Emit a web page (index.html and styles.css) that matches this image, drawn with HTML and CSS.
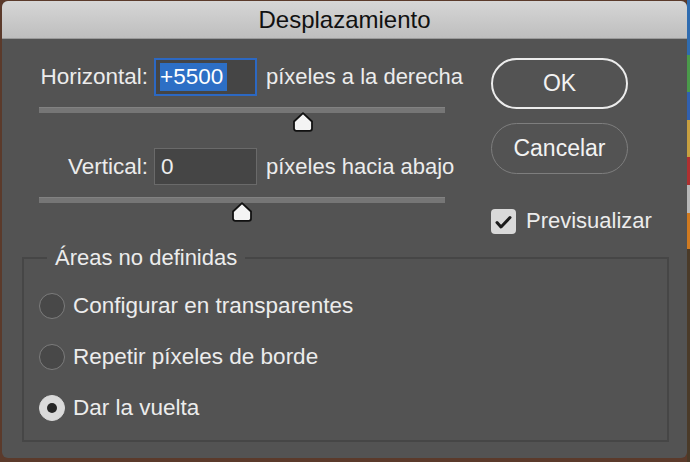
FILE: index.html
```html
<!DOCTYPE html>
<html>
	<head>
		<meta charset="utf-8">
		<link rel="stylesheet" href="styles.css">
	</head>
	<body>
		<div class="window">
			<header class="titlebar">Desplazamiento</header>
			<div class="content">
				<div class="top">
					<div class="fields">
						<div class="field-row">
							<span class="field-label">Horizontal:</span>
							<div class="num-input focused"><span class="sel">+5500</span></div>
							<span class="unit">píxeles a la derecha</span>
						</div>
						<div class="slider">
							<div class="track"></div>
							<span class="thumb" style="left: 65%">
								<svg width="22" height="20" viewBox="0 0 22 20"><path d="M11 1.2 L20 9.5 V16.5 Q20 18.8 17.7 18.8 H4.3 Q2 18.8 2 16.5 V9.5 Z" fill="#f4f4f4" stroke="#111" stroke-width="1.8" stroke-linejoin="round"/></svg>
							</span>
						</div>
						<div class="field-row second">
							<span class="field-label">Vertical:</span>
							<div class="num-input">0</div>
							<span class="unit">píxeles hacia abajo</span>
						</div>
						<div class="slider">
							<div class="track"></div>
							<span class="thumb" style="left: 50%">
								<svg width="22" height="20" viewBox="0 0 22 20"><path d="M11 1.2 L20 9.5 V16.5 Q20 18.8 17.7 18.8 H4.3 Q2 18.8 2 16.5 V9.5 Z" fill="#f4f4f4" stroke="#111" stroke-width="1.8" stroke-linejoin="round"/></svg>
							</span>
						</div>
					</div>
					<div class="actions">
						<button class="btn btn-default" type="button">OK</button>
						<button class="btn" type="button">Cancelar</button>
						<label class="check">
							<span class="box">
								<svg width="25" height="25" viewBox="0 0 25 25"><path d="M6 13.5 L10 18 L19 8.5" fill="none" stroke="#1c1c1c" stroke-width="3" stroke-linecap="round" stroke-linejoin="round"/></svg>
							</span>
							Previsualizar
						</label>
					</div>
				</div>
				<fieldset class="group">
					<legend>Áreas no definidas</legend>
					<label class="radio"><span class="dot"></span>Configurar en transparentes</label>
					<label class="radio"><span class="dot"></span>Repetir píxeles de borde</label>
					<label class="radio"><span class="dot checked"></span>Dar la vuelta</label>
				</fieldset>
			</div>
		</div>
	</body>
</html>
```

FILE: styles.css
```css
:root {
	--panel: #535353;
	--text: #ececec;
	--field: #454545;
	--group-line: #464646;
}
html {
	background:
		linear-gradient(180deg, #2f6cb0 0 12%, #4a9a4a 12% 20%, #3060b0 20% 26%, #c8a040 26% 34%, #b03030 34% 40%, #b8b8b8 40% 46%, #d07a20 46% 54%, #4a3a28 54% 100%) right top / 3px 100% no-repeat,
		#5b3a2b;
	height: 100%;
}
body {
	margin: 0;
	font-family: "Liberation Sans", Arial, sans-serif;
	color: var(--text);
}

.window {
	margin: 1px 0 0 2px;
	width: 685px;
	height: 457px;
	background: var(--panel);
	border-radius: 6px;
	overflow: hidden;
}

.titlebar {
	height: 37px;
	line-height: 37px;
	text-align: center;
	font-size: 24px;
	color: #111;
	background: linear-gradient(#d6d6d6, #bebebe);
	border-bottom: 1px solid #9a9a9a;
}

.content {
	padding-top: 19px;
}

.top {
	display: flex;
	align-items: flex-start;
	height: 164px;
}

.fields {
	width: 430px;
	margin-left: 36px;
}

.field-row {
	display: flex;
	align-items: center;
	height: 38px;
	font-size: 22.5px;
}
.field-row.second {
	height: 37px;
	margin-top: 16px;
}
.field-label {
	width: 112px;
	text-align: right;
	margin-right: 6px;
	margin-left: -2px;
}
.num-input {
	box-sizing: border-box;
	width: 103px;
	height: 100%;
	background: var(--field);
	border: 1px solid #6a6a6a;
	padding-left: 6px;
	line-height: 35px;
	color: #eee;
}
.num-input.focused {
	border: 2px solid #2c68c2;
	padding: 3px 0 0 4px;
	line-height: 28px;
}
.sel {
	display: inline-block;
	height: 28px;
	padding-right: 4px;
	background: #2d6fc5;
	color: #fff;
}
.unit {
	margin-left: 9px;
	font-size: 22px;
}

.slider {
	position: relative;
	width: 406px;
	height: 25px;
	margin: 11px 0 0 1px;
}
.second + .slider {
	margin-top: 12px;
}
.track {
	height: 6px;
	background: #767676;
	border-top: 1px solid #828282;
	box-sizing: border-box;
}
.thumb {
	position: absolute;
	top: 5px;
	transform: translateX(-50%);
	line-height: 0;
}

.actions {
	display: flex;
	flex-direction: column;
	margin-left: 23px;
}
.btn {
	box-sizing: border-box;
	width: 137px;
	height: 51px;
	border-radius: 26px;
	background: transparent;
	border: 1.5px solid #7e7e7e;
	color: #f2f2f2;
	font: 23px "Liberation Sans", Arial, sans-serif;
	padding: 0;
}
.btn + .btn {
	margin-top: 14px;
}
.btn-default {
	border: 2px solid #ececec;
}
.check {
	display: flex;
	align-items: center;
	gap: 10px;
	margin-top: 34px;
	font-size: 22px;
}
.box {
	width: 25px;
	height: 25px;
	border-radius: 4px;
	background: #d9d9d9;
	line-height: 0;
}

.group {
	box-sizing: border-box;
	width: 647px;
	height: 196px;
	margin: 24px 0 0 20px;
	padding: 10px 0 0 15px;
	border: 2px solid var(--group-line);
}
.group legend {
	margin-left: 8px;
	padding: 0 8px;
	font-size: 22px;
	line-height: 24px;
}
.radio {
	display: flex;
	align-items: center;
	height: 51px;
	font-size: 22.5px;
}
.dot {
	box-sizing: border-box;
	width: 26px;
	height: 26px;
	margin-right: 8px;
	border-radius: 50%;
	background: #484848;
	border: 1.5px solid #7c7c7c;
	display: flex;
	align-items: center;
	justify-content: center;
}
.dot.checked {
	background: #dadada;
	border-color: #dadada;
}
.dot.checked::after {
	content: "";
	width: 10px;
	height: 10px;
	border-radius: 50%;
	background: #262626;
}
```
